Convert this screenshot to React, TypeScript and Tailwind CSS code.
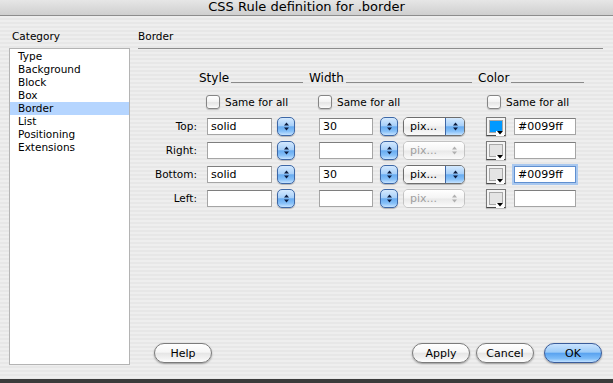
import React from "react";
import clsx from "clsx";

const categories = ["Type", "Background", "Block", "Box", "Border", "List", "Positioning", "Extensions"];

const rows = [
  { label: "Top:", style: "solid", width: "30", unit: true, swatch: "bg-[#0099ff]", hex: "#0099ff", focus: false },
  { label: "Right:", style: "", width: "", unit: false, swatch: "bg-[#e4e4e4]", hex: "", focus: false },
  { label: "Bottom:", style: "solid", width: "30", unit: true, swatch: "bg-[#e4e4e4]", hex: "#0099ff", focus: true },
  { label: "Left:", style: "", width: "", unit: false, swatch: "bg-[#e4e4e4]", hex: "", focus: false },
];

function Arrows({ color = "#0c1d40" }: { color?: string }) {
  return (
    <svg width="7" height="11" viewBox="0 0 7 11">
      <polygon points="3.5,1.5 6,4.5 1,4.5" fill={color} />
      <polygon points="1,6.5 6,6.5 3.5,9.5" fill={color} />
    </svg>
  );
}

function Stepper() {
  return (
    <div className="flex h-[19px] w-[18px] shrink-0 items-center justify-center rounded-[5px] border border-[#3d67a6] bg-[linear-gradient(180deg,#d4e9fe_0%,#a8d0f9_45%,#68acf1_52%,#86c0f8_78%,#c6e3ff_100%)] shadow-[0_1px_1px_rgba(0,0,0,0.25)]">
      <Arrows />
    </div>
  );
}

function UnitPopup({ enabled }: { enabled: boolean }) {
  return (
    <div
      className={clsx(
        "ml-[5px] flex h-[19px] w-[62px] shrink-0 overflow-hidden rounded-[5px] border",
        enabled ? "border-[#6d6d6d] shadow-[0_1px_1px_rgba(0,0,0,0.25)]" : "border-[#c2c2c2]"
      )}
    >
      <div
        className={clsx(
          "flex flex-1 items-center pl-[6px] text-[11px] leading-none bg-[linear-gradient(180deg,#ffffff_0%,#f4f4f4_48%,#e9e9e9_52%,#fafafa_100%)]",
          enabled ? "text-black" : "text-[#a0a0a0]"
        )}
      >
        pix...
      </div>
      <div
        className={clsx(
          "flex w-[19px] items-center justify-center",
          enabled
            ? "border-l border-[#3d67a6] bg-[linear-gradient(180deg,#d4e9fe_0%,#a8d0f9_45%,#68acf1_52%,#86c0f8_78%,#c6e3ff_100%)]"
            : "bg-[linear-gradient(180deg,#ffffff_0%,#f4f4f4_48%,#e9e9e9_52%,#fafafa_100%)]"
        )}
      >
        <Arrows color={enabled ? "#0c1d40" : "#b0b0b0"} />
      </div>
    </div>
  );
}

function Swatch({ fill }: { fill: string }) {
  return (
    <div className="relative ml-[21px] h-[19px] w-[20px] shrink-0 border border-[#7a7a7a] border-b-[#4a4a4a] bg-[#f4f4f4] p-[2px] shadow-[0_1px_1px_rgba(0,0,0,0.2)]">
      <div className={clsx("h-full w-full border border-[#a8a8a8]", fill)} />
      <div className="absolute bottom-[-1px] right-[1px] flex h-[5px] w-[8px] items-start justify-center bg-white">
        <svg width="6" height="4" viewBox="0 0 6 4">
          <polygon points="0,0 6,0 3,3.5" fill="#000" />
        </svg>
      </div>
    </div>
  );
}

function TextBox({ value, className, focus }: { value: string; className: string; focus?: boolean }) {
  return (
    <div
      className={clsx(
        "flex h-[17px] shrink-0 items-center border bg-white pl-[3px] text-[11px] leading-none text-black",
        focus
          ? "border-[#5f8fd0] shadow-[0_0_0_2px_#a9c8ef]"
          : "border-[#a5a5a5] border-t-[#7e7e7e]",
        className
      )}
    >
      {value}
    </div>
  );
}

function Checkbox({ className }: { className: string }) {
  return (
    <div className={clsx("flex items-center", className)}>
      <div className="h-[14px] w-[14px] rounded-[3px] border border-[#858585] bg-[linear-gradient(180deg,#ffffff_0%,#f2f2f2_50%,#e4e4e4_55%,#fbfbfb_100%)] shadow-[0_1px_1px_rgba(0,0,0,0.2)]" />
      <span className="ml-[5px] text-[10.5px] leading-[13px] text-black">Same for all</span>
    </div>
  );
}

function Header({ text, className }: { text: string; className: string }) {
  return (
    <div className={clsx("flex items-end", className)}>
      <span className="text-[12px] leading-[14px] text-black">{text}</span>
      <div className="mb-[2px] ml-[2px] h-px flex-1 bg-[#8a8a8a]" />
    </div>
  );
}

function PillButton({ label, primary, className }: { label: string; primary?: boolean; className?: string }) {
  return (
    <div
      className={clsx(
        "flex h-[20px] w-[58px] items-center justify-center rounded-full border text-[11px] leading-none text-black shadow-[0_1px_2px_rgba(0,0,0,0.35)]",
        primary
          ? "border-[#3a5c9a] bg-[linear-gradient(180deg,#c9e3fe_0%,#9ccbf8_45%,#5aa3f0_52%,#7cbcf8_80%,#c0e0ff_100%)]"
          : "border-[#7b7b7b] bg-[linear-gradient(180deg,#ffffff_0%,#f6f6f6_45%,#e6e6e6_52%,#f2f2f2_80%,#ffffff_100%)]",
        className
      )}
    >
      {label}
    </div>
  );
}

export default function App() {
  return (
    <div className="flex h-[383px] w-[613px] flex-col overflow-hidden font-['DejaVu_Sans',sans-serif] text-black">
      {/* title bar */}
      <div className="flex h-[16px] shrink-0 justify-center border-b border-[#8d8d8d] bg-[linear-gradient(180deg,#e6e6e6,#cfcfcf)]">
        <span className="text-[13px] leading-[14px] text-black">CSS Rule definition for .border</span>
      </div>

      <div className="flex flex-1 bg-[repeating-linear-gradient(180deg,#eeeeee_0px,#eeeeee_2px,#e7e7e7_2px,#e7e7e7_4px)]">
        {/* category column */}
        <div className="ml-[9px] flex w-[121px] flex-col pb-[14px] pt-[14px]">
          <span className="pl-[3px] text-[10.5px] leading-[13px]">Category</span>
          <div className="mt-[5px] flex-1 border border-[#b4b4b4] bg-white pt-px">
            {categories.map((c) => (
              <div
                key={c}
                className={clsx("h-[13px] pl-[8px] text-[10.5px] leading-[13px]", c === "Border" && "bg-[#b5d5ff]")}
              >
                {c}
              </div>
            ))}
          </div>
        </div>

        {/* border panel */}
        <div className="ml-[8px] flex flex-1 flex-col pr-[10px] pt-[14px]">
          <span className="text-[10.5px] leading-[13px]">Border</span>
          <div className="mt-[5px] h-px bg-[#8c8c8c]" />

          <div className="ml-[61px] mt-[22px] flex">
            <Header text="Style" className="w-[104px]" />
            <Header text="Width" className="ml-[6px] w-[163px]" />
            <Header text="Color" className="ml-[6px] w-[106px]" />
          </div>

          <div className="mt-[10px] flex pl-[68px]">
            <Checkbox className="w-[112px]" />
            <Checkbox className="w-[169px]" />
            <Checkbox className="" />
          </div>

          <div className="mt-[8px] flex flex-col gap-[5px]">
            {rows.map((r) => (
              <div key={r.label} className="flex h-[19px] items-center">
                <span className="w-[59px] shrink-0 text-right text-[10.5px] leading-[13px]">{r.label}</span>
                <TextBox value={r.style} className="ml-[10px] w-[65px]" />
                <div className="ml-[5px]">
                  <Stepper />
                </div>
                <TextBox value={r.width} className="ml-[24px] w-[54px]" />
                <div className="ml-[7px]">
                  <Stepper />
                </div>
                <UnitPopup enabled={r.unit} />
                <Swatch fill={r.swatch} />
                <TextBox value={r.hex} focus={r.focus} className="ml-[8px] w-[62px]" />
              </div>
            ))}
          </div>

          <div className="flex-1" />

          <div className="mb-[16px] flex items-center">
            <PillButton label="Help" className="ml-[16px]" />
            <div className="flex-1" />
            <PillButton label="Apply" />
            <PillButton label="Cancel" className="ml-[6px]" />
            <PillButton label="OK" primary className="ml-[10px] mr-px" />
          </div>
        </div>
      </div>

      <div className="h-[4px] shrink-0 bg-[#3b3b3b]" />
    </div>
  );
}
